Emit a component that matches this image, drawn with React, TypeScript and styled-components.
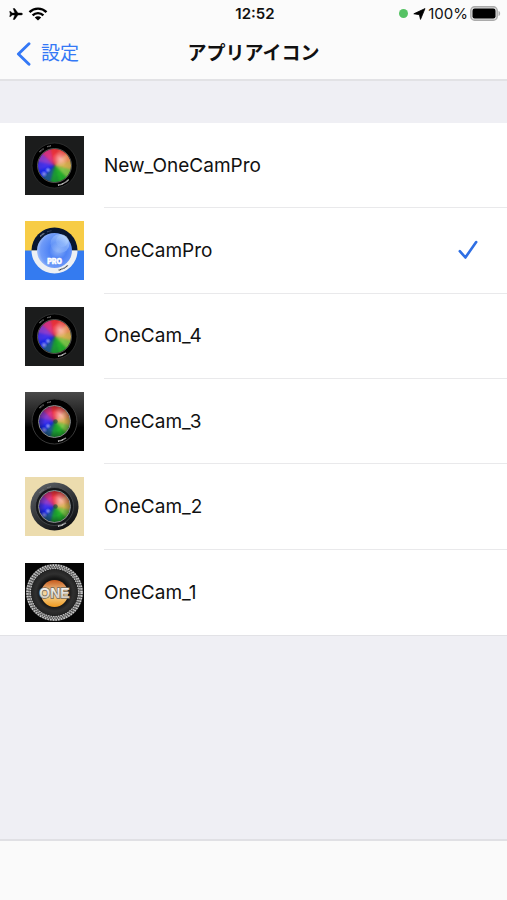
import React, { useState } from "react";
import styled, { createGlobalStyle } from "styled-components";

const GlobalStyle = createGlobalStyle`
  * { box-sizing: border-box; }
  body {
    margin: 0;
    background: #efeff4;
    color: #111;
    font-family: Inter, "Noto Sans CJK JP", sans-serif;
  }
`;

const Screen = styled.div`
  min-height: 100vh;
  display: flex;
  flex-direction: column;
`;

const Header = styled.header`
  background: #fbfbfb;
  border-bottom: 2px solid #e2e2e5;
`;

const Columns = styled.div`
  display: grid;
  grid-template-columns: 1fr auto 1fr;
  align-items: center;
`;

const StatusBar = styled(Columns)`
  height: 27px;
  padding: 0 6px 0 9px;
  font-size: 15px;
`;

const StatusGroup = styled.div<{ $end?: boolean }>`
  display: flex;
  align-items: center;
  justify-content: ${(p) => (p.$end ? "flex-end" : "flex-start")};
  gap: ${(p) => (p.$end ? "2px" : "5px")};
`;

const Clock = styled.time`
  font-weight: 600;
`;

const CameraDot = styled.span`
  width: 9px;
  height: 9px;
  margin-right: 3px;
  border-radius: 50%;
  background: #56c264;
`;

const NavBar = styled(Columns)`
  height: 52px;
  padding: 2px 16px 0;
`;

const BackButton = styled.button`
  display: flex;
  align-items: center;
  justify-self: start;
  gap: 10px;
  padding: 0;
  border: 0;
  background: none;
  color: #3478f6;
  font: inherit;
  font-size: 19px;
  line-height: 28px;
  cursor: pointer;
`;

const Title = styled.h1`
  margin: 0;
  font-size: 19px;
  line-height: 28px;
  font-weight: 700;
`;

const Content = styled.main`
  flex: 1;
  padding-top: 42px;
`;

const IconList = styled.ul`
  display: grid;
  grid-auto-rows: 1fr;
  min-height: 513px;
  margin: 0;
  padding: 0 0 0 25px;
  list-style: none;
  background: #fff;
  border-bottom: 1px solid #e2e2e6;
`;

const Row = styled.label`
  display: flex;
  align-items: center;
  gap: 20px;
  height: 100%;
  cursor: pointer;
`;

const Artwork = styled.svg`
  flex: none;
  width: 59px;
  height: 59px;
`;

const RowBody = styled.span<{ $divided: boolean }>`
  flex: 1;
  align-self: stretch;
  display: flex;
  align-items: center;
  justify-content: space-between;
  padding-right: 29px;
  border-bottom: ${(p) => (p.$divided ? "1px solid #e9e9eb" : "0")};
  font-size: 19px;
`;

const Radio = styled.input`
  position: absolute;
  width: 1px;
  height: 1px;
  margin: 0;
  opacity: 0;
`;

const BottomBar = styled.footer`
  height: 61px;
  background: #fafafa;
  border-top: 2px solid #e0e0e4;
`;

const hues = ["#f0343c", "#f4504a", "#f2905c", "#d8b050", "#7cc448", "#22b02c", "#1c9a34", "#1f5a90", "#1a28ee", "#4432ec", "#8c3cd0", "#dc3484"];

const point = (degrees: number, radius: number) => {
  const a = (degrees * Math.PI) / 180;
  return `${(29.5 + Math.sin(a) * radius).toFixed(2)} ${(29.5 - Math.cos(a) * radius).toFixed(2)}`;
};

type LensLook = "flat" | "plain" | "gloss" | "cream";

function LensArt({ look }: { look: LensLook }) {
  const id = `lens-${look}`;
  const old = look === "gloss" || look === "cream";
  const background = look === "cream" ? "#ecdcae" : look === "gloss" ? `url(#${id}-bg)` : "#1b1c1c";
  return (
    <Artwork viewBox="0 0 59 59" aria-hidden="true">
      <defs>
        <linearGradient id={`${id}-bg`} x2="0" y2="1">
          <stop stopColor="#4a4a4a" />
          <stop offset="0.5" stopColor="#141414" />
          <stop offset="0.6" stopColor="#000" />
        </linearGradient>
        <linearGradient id={`${id}-body`} x1="0.2" x2="0.8" y2="1">
          <stop stopColor="#5c6166" />
          <stop offset="0.6" stopColor="#2a2c2f" />
          <stop offset="1" stopColor="#0c0c0e" />
        </linearGradient>
        <clipPath id={`${id}-clip`}>
          <circle cx="29.5" cy="29.5" r={old ? 15.5 : 16.5} />
        </clipPath>
        <filter id={`${id}-soft`} x="-20%" y="-20%" width="140%" height="140%" colorInterpolationFilters="sRGB">
          <feGaussianBlur stdDeviation="1.3" />
        </filter>
        <radialGradient id={`${id}-glow`}>
          <stop stopColor="#fff" stopOpacity="0.5" />
          <stop offset="1" stopColor="#fff" stopOpacity="0" />
        </radialGradient>
        <radialGradient id={`${id}-shade`}>
          <stop offset="0.55" stopColor="#000" stopOpacity="0" />
          <stop offset="1" stopColor="#000" stopOpacity={old ? 0.4 : 0.08} />
        </radialGradient>
      </defs>
      <rect width="59" height="59" fill={background} />
      {look === "cream" ? (
        <>
          <circle cx="29.5" cy="29.5" r="24" fill={`url(#${id}-body)`} />
          <circle cx="29.5" cy="29.5" r="19" fill="#15171a" stroke="#55595c" strokeWidth="0.6" />
        </>
      ) : (
        <circle cx="29.5" cy="29.5" r="22.5" fill="#000" stroke={old ? "#383838" : "#353737"} strokeWidth={old ? 1 : 0.7} />
      )}
      <g clipPath={`url(#${id}-clip)`}>
        <g filter={`url(#${id}-soft)`}>
          {hues.map((hue, i) => (
            <path key={hue} d={`M29.5 29.5L${point(i * 30 - 16, 24)}L${point(i * 30 + 16, 24)}Z`} fill={hue} />
          ))}
        </g>
        <circle cx="35" cy="23" r="8" fill={`url(#${id}-glow)`} />
        <circle cx="23" cy="34" r="3" fill={`url(#${id}-glow)`} />
        <circle cx="19" cy="38" r="3.5" fill={`url(#${id}-glow)`} />
        <circle cx="29.5" cy="29.5" r="17" fill={`url(#${id}-shade)`} />
        {old && <circle cx="30.5" cy="29.5" r="2.2" fill="#174c3c" opacity="0.65" />}
      </g>
      <circle cx="29.5" cy="29.5" r={old ? 16 : 17} fill="none" stroke={old ? "#999d9e" : "#8c8c84"} strokeWidth={old ? 0.9 : 0.6} />
      <path
        d={`M${point(-48, 20)}A20 20 0 0 1 ${point(-32, 20)}M${point(-21, 20)}A20 20 0 0 1 ${point(-10, 20)}`}
        fill="none"
        stroke="#c8c8c8"
        strokeWidth="1.1"
        strokeDasharray="0.9 0.5"
        opacity={look === "cream" ? 0.4 : 0.8}
      />
      <path
        d={`M${point(170, 20)}A20 20 0 0 0 ${point(look === "flat" ? 135 : 145, 20)}`}
        fill="none"
        stroke="#eee"
        strokeWidth="1.3"
        strokeDasharray="1 0.4"
      />
    </Artwork>
  );
}

function ProArt() {
  return (
    <Artwork viewBox="0 0 59 59" aria-hidden="true">
      <defs>
        <radialGradient id="pro-ball" cx="0.6" cy="0.5" r="0.62">
          <stop stopColor="#8db2f8" />
          <stop offset="0.4" stopColor="#4f83f5" />
          <stop offset="0.8" stopColor="#6f9bf8" />
          <stop offset="1" stopColor="#a8c4fb" />
        </radialGradient>
        <linearGradient id="pro-shine" x1="1" x2="0" y2="1">
          <stop stopColor="#cde6ff" stopOpacity="0.7" />
          <stop offset="1" stopColor="#8db8ff" stopOpacity="0.1" />
        </linearGradient>
      </defs>
      <rect width="59" height="30" fill="#f7cc46" />
      <rect y="29.5" width="59" height="29.5" fill="#347bf0" />
      <path d="M6.5 29.5a23 23 0 0 1 46 0z" fill="#07152f" />
      <path d="M6.5 29.5a23 23 0 0 0 46 0z" fill="#edf0f4" />
      <circle cx="29.5" cy="29.5" r="17.5" fill="url(#pro-ball)" />
      <circle cx="35" cy="22.5" r="9.5" fill="url(#pro-shine)" />
      <circle cx="37" cy="20" r="6" fill="url(#pro-shine)" />
      <path d={`M${point(-45, 20)}A20 20 0 0 1 ${point(-31, 20)}`} fill="none" stroke="#c5cad4" strokeWidth="1.1" strokeDasharray="0.9 0.5" />
      <path d={`M${point(-22, 20)}A20 20 0 0 1 ${point(-9, 20)}`} fill="none" stroke="#56627b" strokeDasharray="0.9 0.5" />
      <path d={`M${point(168, 20)}A20 20 0 0 0 ${point(138, 20)}`} fill="none" stroke="#333a46" strokeWidth="1.2" strokeDasharray="1 0.4" />
      <text x="29.5" y="43" textAnchor="middle" fontFamily="Inter, sans-serif" fontSize="7" fontWeight="900" fill="#fff" stroke="#fff" strokeWidth="0.4">
        PRO
      </text>
    </Artwork>
  );
}

function OneArt() {
  return (
    <Artwork viewBox="0 0 59 59" aria-hidden="true">
      <defs>
        <linearGradient id="one-sun" x2="0" y2="1">
          <stop stopColor="#c75a1c" />
          <stop offset="0.5" stopColor="#f6d9a0" />
          <stop offset="1" stopColor="#f09a20" />
        </linearGradient>
        <linearGradient id="one-metal" x2="0" y2="1">
          <stop stopColor="#fff" />
          <stop offset="1" stopColor="#c9c1b4" />
        </linearGradient>
        <radialGradient id="one-disc">
          <stop offset="0.6" stopColor="#151515" />
          <stop offset="0.8" stopColor="#303030" />
          <stop offset="1" stopColor="#242424" />
        </radialGradient>
      </defs>
      <rect width="59" height="59" fill="#050505" />
      <circle cx="29.5" cy="29.5" r="26" fill="none" stroke="#4c4c4c" strokeWidth="5" />
      <circle cx="29.5" cy="29.5" r="27.4" fill="none" stroke="#ccc" strokeWidth="1.7" strokeDasharray="1.6 1.1" />
      <circle cx="29.5" cy="29.5" r="25.7" fill="none" stroke="#bbb" strokeWidth="1.5" strokeDasharray="1.4 1.2" />
      <circle cx="29.5" cy="29.5" r="24" fill="none" stroke="#c2c2c2" strokeWidth="1.4" strokeDasharray="1.5 1" />
      <circle cx="29.5" cy="29.5" r="23.3" fill="url(#one-disc)" />
      <circle cx="29.5" cy="30.5" r="13.5" fill="url(#one-sun)" />
      <text
        x="29.5"
        y="35"
        textAnchor="middle"
        fontFamily="'Liberation Sans Narrow', 'Liberation Sans', sans-serif"
        fontSize="14"
        fontWeight="700"
        fill="url(#one-metal)"
        stroke="#6d665c"
        strokeWidth="1.4"
        paintOrder="stroke"
      >
        ONE
      </text>
    </Artwork>
  );
}

const Airplane = () => (
  <svg width="14" height="12" viewBox="0 0 14 12" aria-label="機内モード" role="img">
    <path d="M13.5 6c0-.7-.8-1-1.6-1H9L5.7.5H4.2L5.8 5H3.1L1.8 3.4H.6L1.3 6 .6 8.6h1.2L3.1 7h2.7l-1.6 4.5h1.5L9 7h2.9c.8 0 1.6-.3 1.6-1z" fill="#000" stroke="#000" strokeWidth="0.4" />
  </svg>
);

const Wifi = () => (
  <svg width="20" height="14" viewBox="0 0 20 14" aria-label="Wi-Fi" role="img">
    <path d="M1.5 5.1a12.2 12.2 0 0 1 17 0M4.6 8.3a7.8 7.8 0 0 1 10.8 0" fill="none" stroke="#000" strokeWidth="2.4" />
    <path d="M10 13.6 6.8 10.5a4.6 4.6 0 0 1 6.4 0z" fill="#000" />
  </svg>
);

const Location = () => (
  <svg width="13" height="12" viewBox="0 0 13 12" aria-label="位置情報" role="img">
    <path d="M12 .6 7.5 11.4 6.4 6.7.8 5.8z" fill="#000" stroke="#000" strokeWidth="0.8" strokeLinejoin="round" />
  </svg>
);

const Battery = () => (
  <svg width="31" height="15" viewBox="0 0 31 15" aria-label="バッテリー" role="img">
    <rect x="0.8" y="0.8" width="26.4" height="13.4" rx="3.8" fill="#ddd" stroke="#aaa" strokeWidth="1.4" />
    <rect x="2.5" y="2.5" width="23" height="10" rx="2.2" fill="#000" />
    <path d="M28.5 5c2.2.6 2.2 4.4 0 5z" fill="#aaa" />
  </svg>
);

const Chevron = () => (
  <svg width="15" height="24" viewBox="0 0 15 24" aria-hidden="true">
    <path d="M13 1.8 2.4 12 13 22.2" fill="none" stroke="#3478f6" strokeWidth="2.9" strokeLinecap="round" strokeLinejoin="round" />
  </svg>
);

const Check = () => (
  <svg width="20" height="20" viewBox="0 0 20 20" aria-hidden="true">
    <path d="m1.8 11.2 5.6 6.3L18.2 2" fill="none" stroke="#2f6fe4" strokeWidth="2.6" strokeLinecap="round" strokeLinejoin="round" />
  </svg>
);

const options = [
  { name: "New_OneCamPro", art: <LensArt look="flat" /> },
  { name: "OneCamPro", art: <ProArt /> },
  { name: "OneCam_4", art: <LensArt look="plain" /> },
  { name: "OneCam_3", art: <LensArt look="gloss" /> },
  { name: "OneCam_2", art: <LensArt look="cream" /> },
  { name: "OneCam_1", art: <OneArt /> },
];

export default function App() {
  const [selected, setSelected] = useState("OneCamPro");
  return (
    <Screen>
      <GlobalStyle />
      <Header>
        <StatusBar>
          <StatusGroup>
            <Airplane />
            <Wifi />
          </StatusGroup>
          <Clock>12:52</Clock>
          <StatusGroup $end>
            <CameraDot />
            <Location />
            <span>100%</span>
            <Battery />
          </StatusGroup>
        </StatusBar>
        <NavBar as="nav">
          <BackButton type="button">
            <Chevron />
            設定
          </BackButton>
          <Title>アプリアイコン</Title>
        </NavBar>
      </Header>
      <Content>
        <IconList>
          {options.map(({ name, art }, index) => (
            <li key={name}>
              <Row>
                <Radio type="radio" name="app-icon" value={name} checked={selected === name} onChange={() => setSelected(name)} />
                {art}
                <RowBody $divided={index < options.length - 1}>
                  {name}
                  {selected === name && <Check />}
                </RowBody>
              </Row>
            </li>
          ))}
        </IconList>
      </Content>
      <BottomBar />
    </Screen>
  );
}
